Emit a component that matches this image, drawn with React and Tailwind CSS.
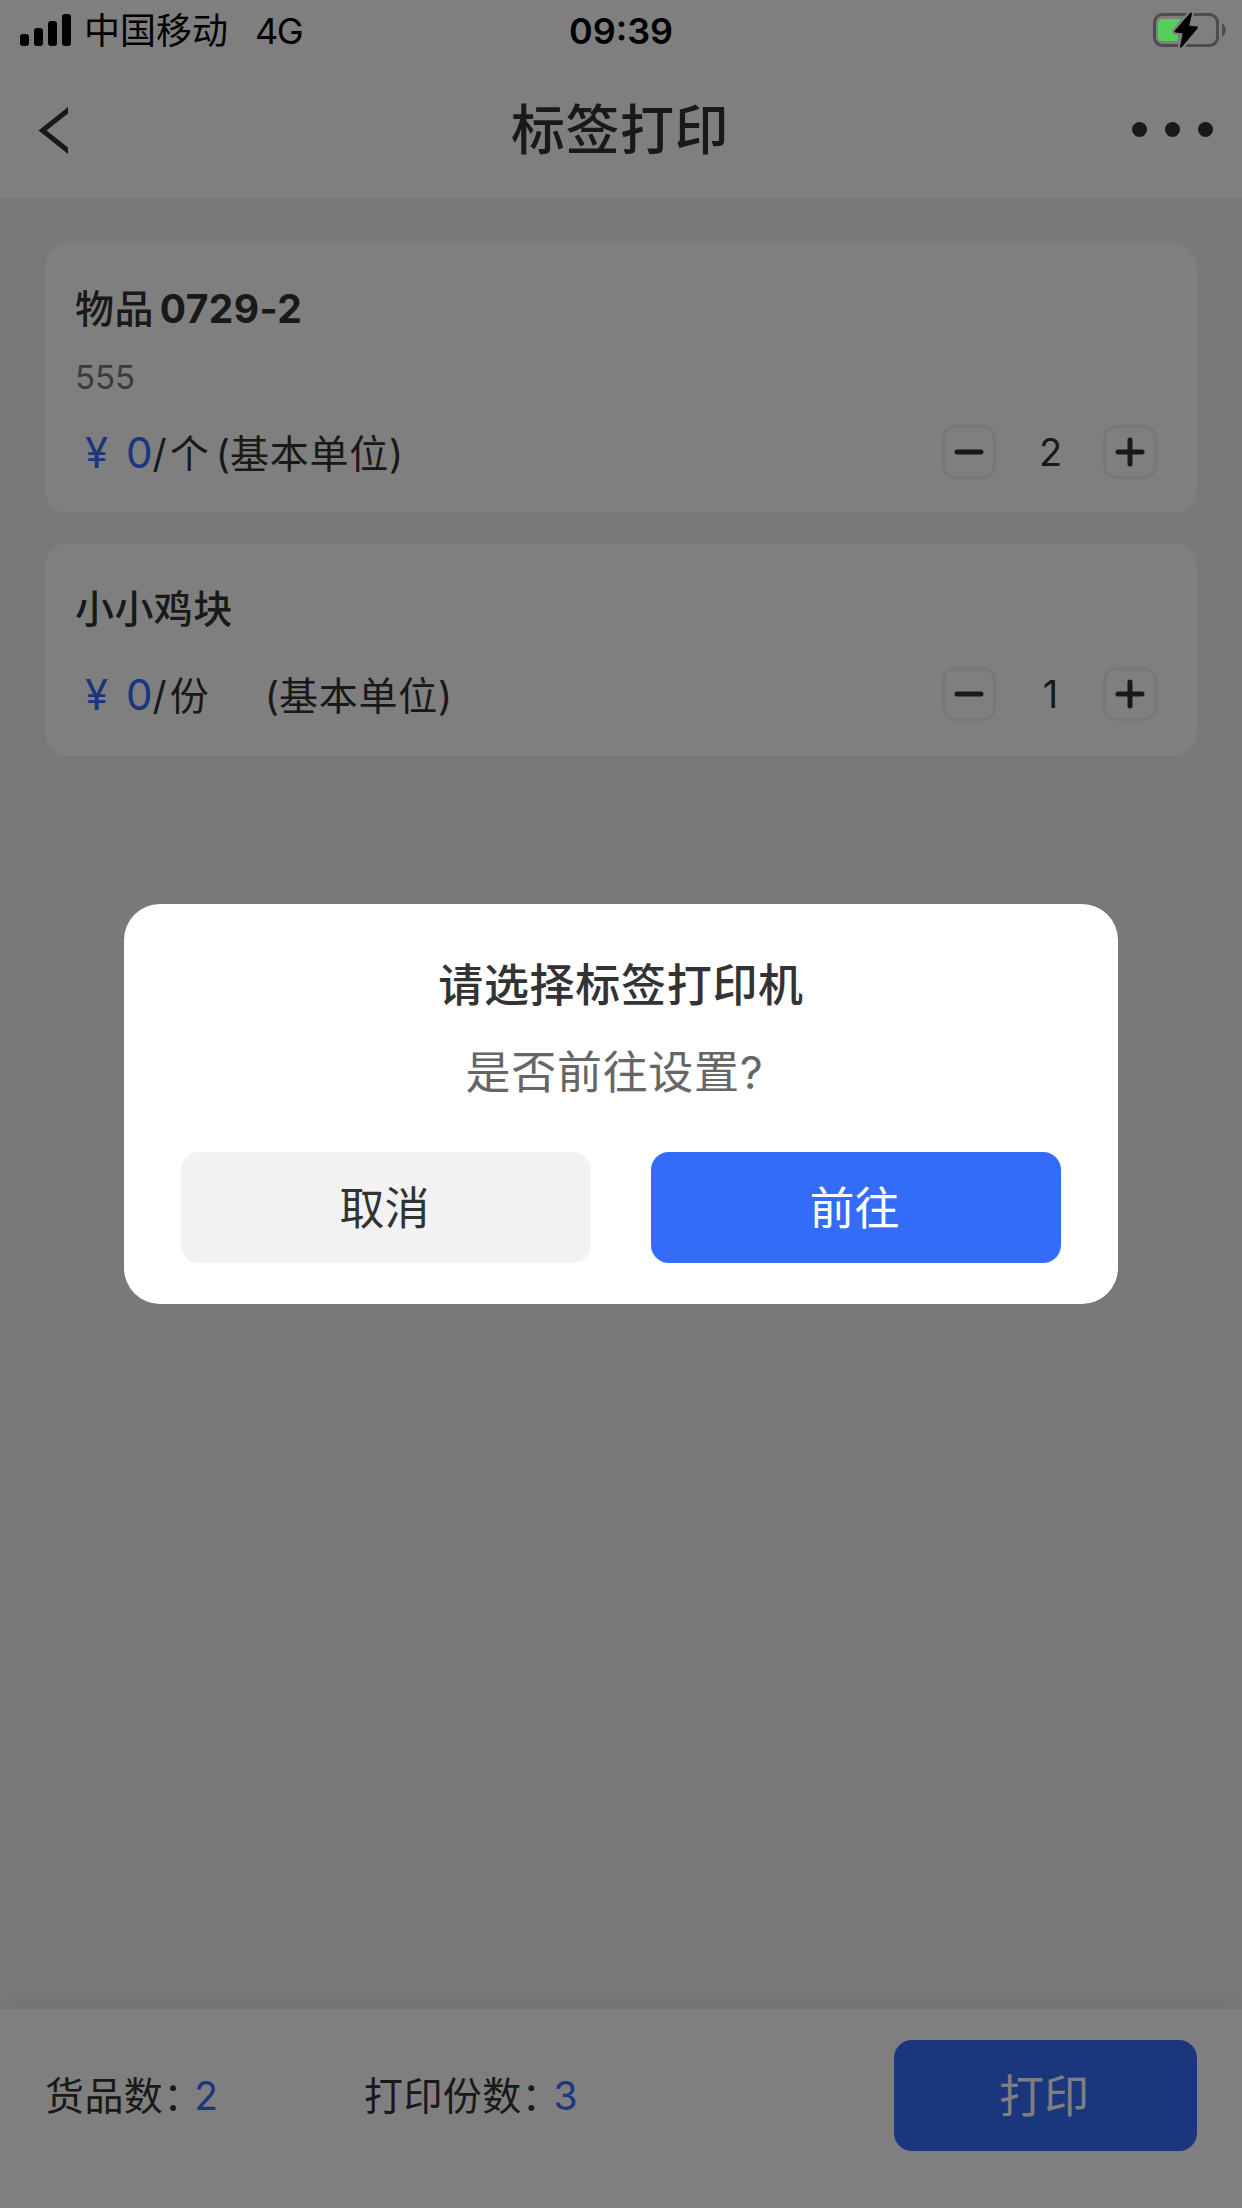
const products = [
  { id: 1, name: '物品', suffix: '0729-2', code: '555', price: 0, unit: '个', unitClass: 'ml-[7px]', count: 2 },
  { id: 2, name: '小小鸡块', suffix: '', code: '', price: 0, unit: '份', unitClass: 'ml-[56px]', count: 1 },
];

const StatusBar = () => (
  <div className="relative z-20 grid h-[60px] grid-cols-[1fr_auto_1fr] items-center text-black">
    <div className="flex items-center">
      <svg className="ml-5 shrink-0" width="52" height="34" viewBox="0 0 52 34">
        <rect x="0" y="21" width="9" height="12" rx="3" />
        <rect x="14" y="15" width="9" height="18" rx="3" />
        <rect x="28" y="8" width="9" height="25" rx="3" />
        <rect x="42" y="1" width="9" height="32" rx="3" />
      </svg>
      <div className="ml-3 pt-0.5 text-[36px] leading-[58px]">
        <span>中国移动</span>
        <span className="ml-[27px] tracking-[-1.5px]">4G</span>
      </div>
    </div>
    <div className="pt-0.5 text-[36px] font-semibold leading-[58px]">09:39</div>
    <div className="flex justify-end pr-[15px]">
      <svg width="74" height="38" viewBox="0 0 74 38">
        <rect x="1.5" y="3.5" width="63" height="31" rx="8" fill="none" stroke="#4c4c4e" strokeWidth="3" />
        <path d="M9 8h19l-8 12h6l-2 10H9a4 4 0 0 1-4-4V12a4 4 0 0 1 4-4z" fill="#53cf5a" />
        <path d="M69 12.5c5 2.5 5 10.5 0 13z" fill="#4c4c4e" />
        <path
          d="M38 2L22 20.5l8.5 1L28 36l16-19.5-9-1z"
          fill="#808080"
          stroke="#808080"
          strokeWidth="6"
          strokeLinejoin="round"
        />
        <path
          d="M38 2.5L22.5 20.5l8.5 1L28 35.5l16-19-9-1z"
          fill="#000"
          stroke="#000"
          strokeWidth="2"
          strokeLinejoin="round"
        />
      </svg>
    </div>
  </div>
);

const Header = () => (
  <div className="grid h-[138px] grid-cols-[1fr_auto_1fr] items-center pl-[38px] pr-7">
    <svg width="30" height="50" viewBox="0 0 30 50" fill="none" stroke="#333" strokeWidth="5">
      <path d="M34 3L4.5 26.5L34 50" />
    </svg>
    <h1 className="pr-3 pt-1 text-[54px] font-medium leading-[80px] tracking-[0.5px]">标签打印</h1>
    <svg className="justify-self-end" width="82" height="16" viewBox="0 0 82 16" fill="#333">
      <circle cx="7.5" cy="8.5" r="7.5" />
      <circle cx="40.5" cy="8.5" r="7.5" />
      <circle cx="73.5" cy="8.5" r="7.5" />
    </svg>
  </div>
);

const StepButton = ({ plus }) => (
  <button className="flex size-[54px] items-center justify-center rounded-[13px] border-3 border-[#f0f0f0]">
    <svg width="30" height="30" viewBox="0 0 30 30" stroke="#333" strokeWidth="5" strokeLinecap="round">
      <path d={plus ? 'M3 15h24M15 3v24' : 'M3 15h24'} />
    </svg>
  </button>
);

const ProductCard = ({ item }) => (
  <div className="rounded-3xl bg-white pb-[33px] pl-[30px] pr-10 pt-9">
    <div className="flex h-[60px] items-center text-[39px] leading-[60px]">
      <span className="font-medium tracking-[0.4px]">{item.name}</span>
      {item.suffix && <span className="ml-1.5 font-bold tracking-[0.4px]">{item.suffix}</span>}
    </div>
    {item.code && (
      <div className="mt-[13px] h-[50px] text-[33px] leading-[50px] text-[#777]">{item.code}</div>
    )}
    <div className={item.code ? 'mt-[21px] flex h-[57px] items-center' : 'mt-[26px] flex h-[58px] items-center'}>
      <div className="flex flex-1 items-baseline pt-[3px] text-[39px] leading-[56px]">
        <span className="ml-2.5 text-[42px] text-[#346cfa]">¥</span>
        <span className="ml-[18px] text-[42px] text-[#346cfa]">{item.price}</span>
        <span>/</span>
        <span className="ml-[3px]">{item.unit}</span>
        <span className={item.unitClass}>
          (<span className="tracking-[0.8px]">基本单位</span>)
        </span>
      </div>
      <StepButton />
      <span className="w-[107px] pl-0.5 text-center text-[38px] leading-[54px]">{item.count}</span>
      <StepButton plus />
    </div>
  </div>
);

const Footer = () => (
  <div className="flex h-[199px] items-start justify-between bg-white pl-[45px] pr-[45px] pt-[31px] shadow-[0_-6px_30px_rgba(0,0,0,0.06)]">
    <div className="flex h-[111px] items-center text-[39px] leading-[60px] tracking-[0.4px]">
      <div className="flex w-[319px]">
        <span>货品数</span>
        <span className="w-[31px] [font-feature-settings:'halt']">：</span>
        <span className="text-[#346cfa]">2</span>
      </div>
      <div className="flex">
        <span>打印份数</span>
        <span className="w-8 [font-feature-settings:'halt']">：</span>
        <span className="text-[#346cfa]">3</span>
      </div>
    </div>
    <button className="h-[111px] w-[303px] rounded-[18px] bg-[#346cfa] pr-[3px] pt-[3px] text-[45px] leading-[60px] text-white">
      打印
    </button>
  </div>
);

const ConfirmDialog = () => (
  <div className="absolute inset-0 z-10 flex items-center justify-center bg-black/50">
    <div className="h-[400px] w-[994px] rounded-[36px] bg-white px-[57px] pt-[50px] text-center">
      <h2 className="text-[45px] font-medium leading-[64px] tracking-[0.7px]">请选择标签打印机</h2>
      <p className="mt-[23px] pr-[13px] text-[45px] leading-[64px] tracking-[0.7px] text-[#666]">是否前往设置?</p>
      <div className="mt-[47px] flex justify-between">
        <button className="h-[111px] w-[410px] rounded-[18px] bg-[#f2f2f2] pr-[3px] pt-[3px] text-[45px]">取消</button>
        <button className="h-[111px] w-[410px] rounded-[18px] bg-[#346cfa] pr-[3px] pt-[3px] text-[45px] text-white">前往</button>
      </div>
    </div>
  </div>
);

const App = () => {
  return (
    <div className="relative flex h-[2208px] w-[1242px] flex-col overflow-hidden bg-[#f2f2f2] font-['Inter','Noto_Sans_CJK_SC',sans-serif] text-[#333]">
      <div className="bg-white">
        <StatusBar />
        <Header />
      </div>
      <div className="flex flex-1 flex-col gap-[30px] px-[45px] pt-[45px]">
        {products.map((item) => (
          <ProductCard key={item.id} item={item} />
        ))}
      </div>
      <Footer />
      <ConfirmDialog />
    </div>
  );
};

export default App;
